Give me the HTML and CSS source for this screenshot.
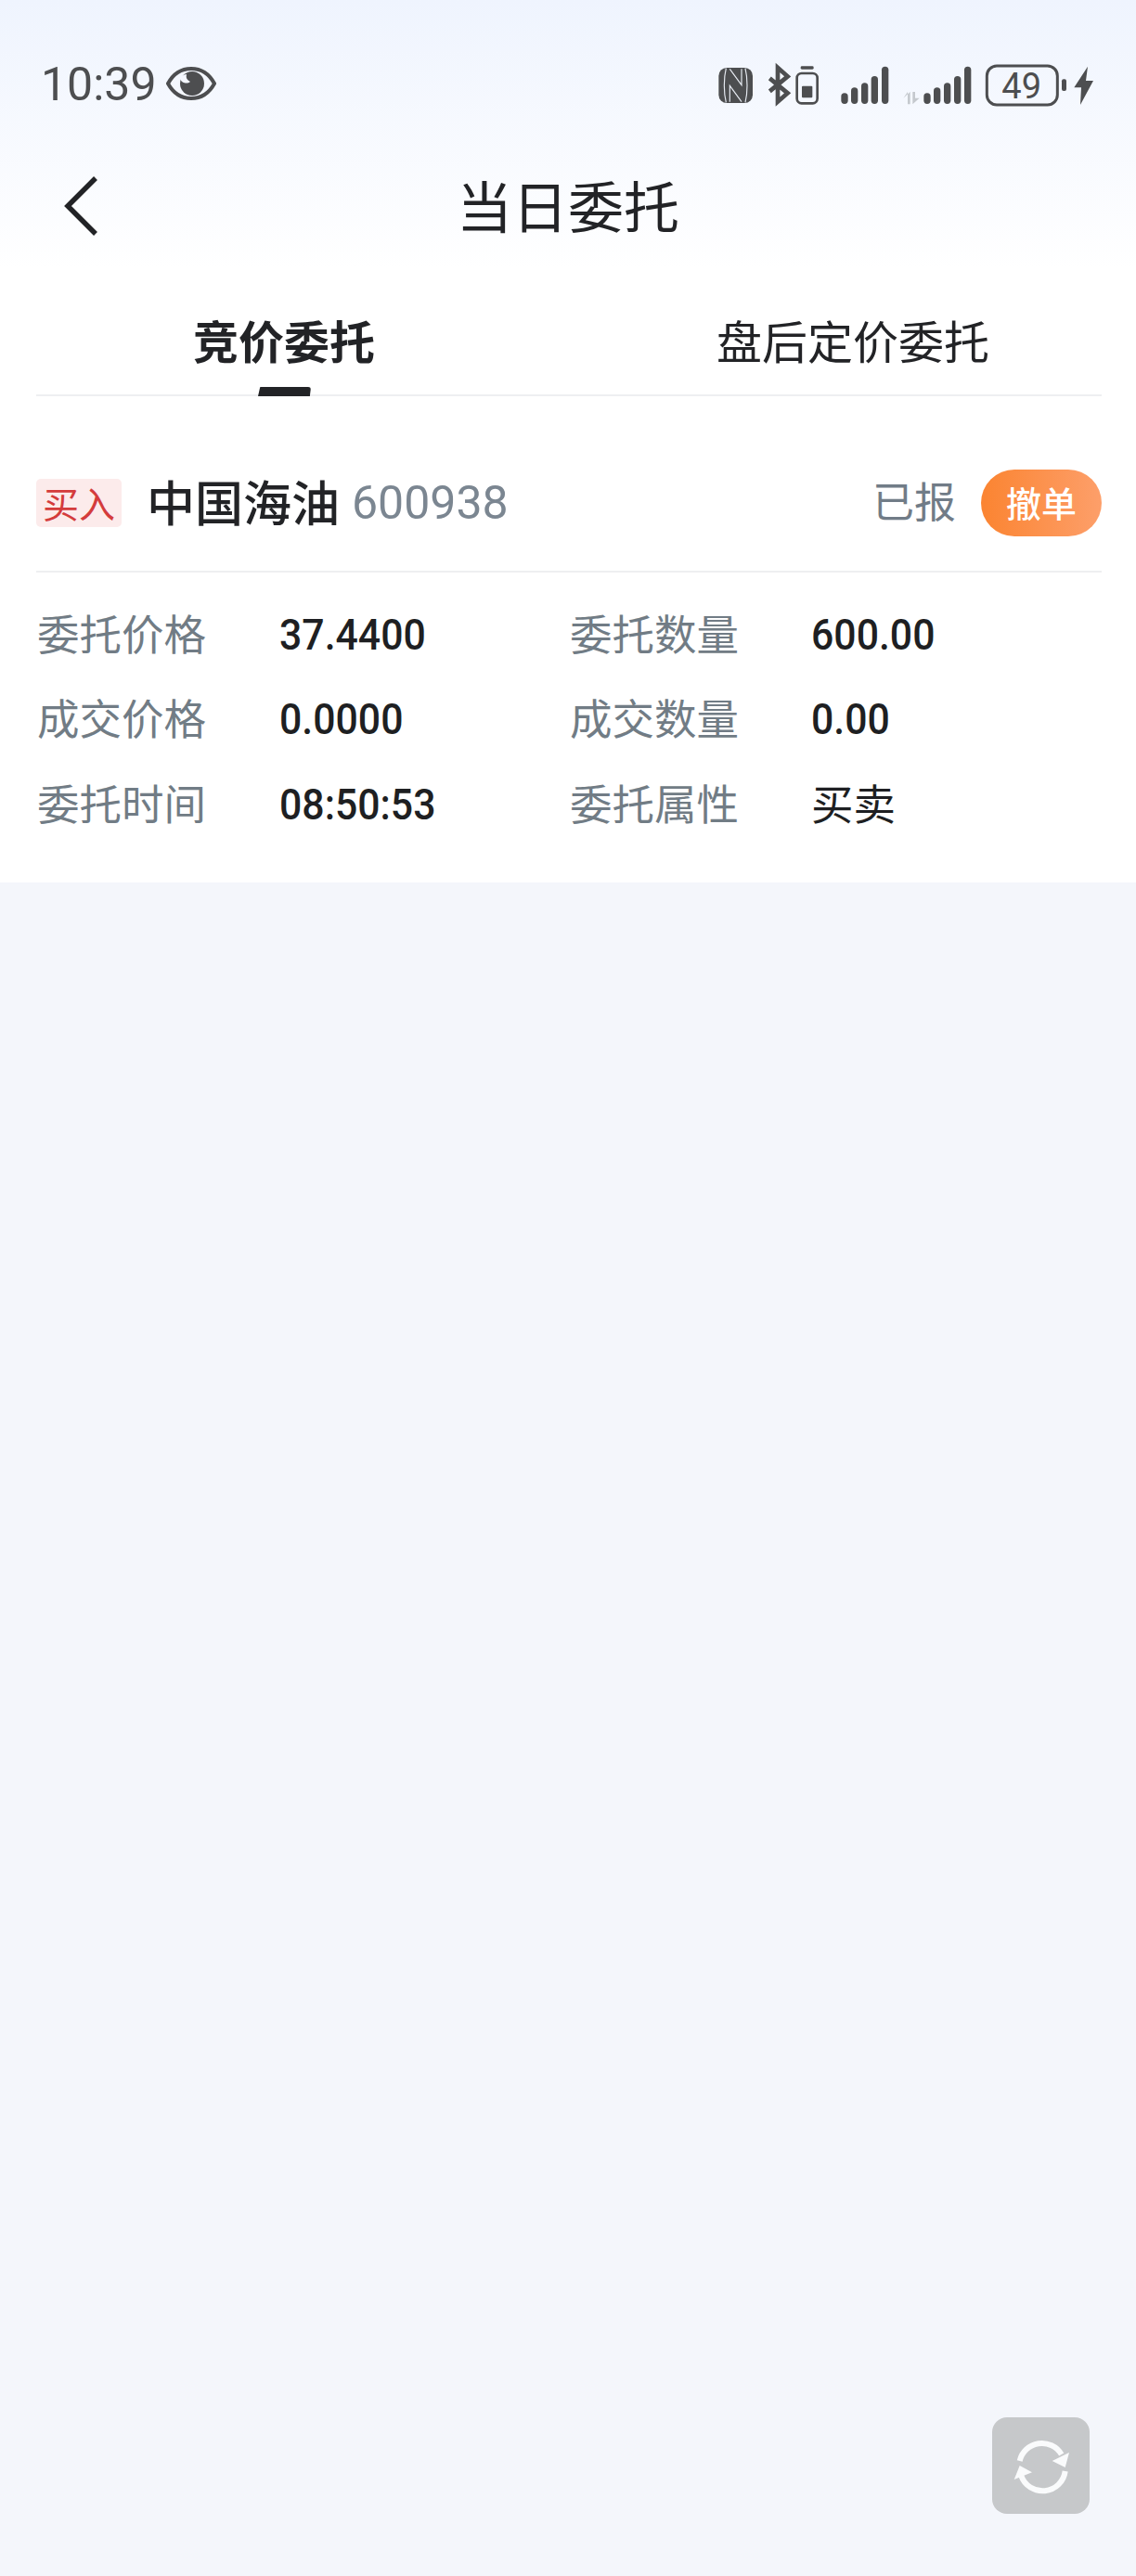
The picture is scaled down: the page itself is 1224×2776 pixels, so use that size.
FILE: index.html
```html
<!DOCTYPE html>
<html lang="zh-CN">
<head>
<meta charset="utf-8">
<title>当日委托</title>
<link rel="stylesheet" href="styles.css">
</head>
<body>
<div class="page">
  <div class="top">
    <div class="status">
      <div class="status-left">
        <span class="time">10:39</span>
        <svg class="eye" viewBox="0 0 54 36" width="54" height="36">
          <path d="M2 18C8 7 16 2 27 2s19 5 25 16c-6 11-14 16-25 16S8 29 2 18z" fill="none" stroke="#4d4e50" stroke-width="4"/>
          <circle cx="28" cy="18" r="13" fill="#4d4e50"/>
          <path d="M15 13a7 7 0 0 0 11 3 7 7 0 0 1-4-8 8 8 0 0 0-7 5z" fill="#f4f7fe"/>
        </svg>
      </div>
      <svg class="status-right" viewBox="0 0 484 80" width="484" height="80">
        <g transform="scale(.33333)">
          <rect x="103" y="66" width="110" height="114" rx="26" fill="#4d4e50"/>
          <path d="M127 68C119 100 119 146 127 178M189 68C197 100 197 146 189 178M139 176V124L177 176M177 70V122L139 70" fill="none" stroke="#e6eaf1" stroke-width="3.500"/>
          <path d="M268 100 326 148 294 176V66L326 94 268 142" fill="none" stroke="#4d4e50" stroke-width="14"/>
          <rect x="368" y="61" width="42" height="10" rx="4" fill="#4d4e50"/>
          <rect x="356" y="84" width="66" height="97" rx="15" fill="none" stroke="#4d4e50" stroke-width="8"/>
          <rect x="372" y="125" width="34" height="38" rx="3" fill="#4d4e50"/>
          <g fill="#4d4e50">
            <rect x="499" y="148" width="22" height="35" rx="11"/>
            <rect x="531" y="130" width="22" height="53" rx="11"/>
            <rect x="564" y="115" width="22" height="68" rx="11"/>
            <rect x="596" y="93" width="22" height="90" rx="11"/>
            <rect x="630" y="62" width="22" height="121" rx="11"/>
            <rect x="766" y="148" width="22" height="35" rx="11"/>
            <rect x="798" y="130" width="22" height="53" rx="11"/>
            <rect x="831" y="115" width="22" height="68" rx="11"/>
            <rect x="864" y="93" width="22" height="90" rx="11"/>
            <rect x="897" y="62" width="22" height="121" rx="11"/>
          </g>
          <path d="M700 164 714 144V184H722V144ZM730 144H738V164H752L730 184Z" fill="#c5c9ce"/>
          <rect x="970" y="60" width="228" height="126" rx="32" fill="none" stroke="#4d4e50" stroke-width="9"/>
          <rect x="1212" y="103" width="15" height="38" rx="6" fill="#4d4e50"/>
          <path d="M1296 62 1252 130H1275L1272 186 1314 108H1290z" fill="#4d4e50"/>
          <text class="batt" x="1082" y="166" text-anchor="middle">49</text>
        </g>
      </svg>
    </div>
    <div class="nav">
      <svg class="back" viewBox="0 0 42 68" width="42" height="68">
        <path d="M36 4 6 34 36 64" fill="none" stroke="#222326" stroke-width="5.5"/>
      </svg>
      <h1 class="title">当日委托</h1>
    </div>
    <div class="tabs">
      <div class="tab tab-active">竞价委托</div>
      <div class="tab tab-plain">盘后定价委托</div>
    </div>
  </div>
  <div class="rule"></div>
  <section class="order">
    <div class="order-head">
      <span class="tag">买入</span>
      <span class="name">中国海油</span>
      <span class="code">600938</span>
      <span class="state">已报</span>
      <span class="cancel">撤单</span>
    </div>
    <div class="details">
      <span class="label">委托价格</span><span class="value"><span class="num">37.4400</span></span>
      <span class="label">委托数量</span><span class="value"><span class="num">600.00</span></span>
      <span class="label">成交价格</span><span class="value"><span class="num">0.0000</span></span>
      <span class="label">成交数量</span><span class="value"><span class="num">0.00</span></span>
      <span class="label">委托时间</span><span class="value"><span class="num">08:50:53</span></span>
      <span class="label">委托属性</span><span class="value-cjk">买卖</span>
    </div>
  </section>
  <button class="refresh" aria-label="刷新">
    <svg class="refresh-icon" viewBox="0 0 60 60" width="60" height="60">
      <path d="M6.700 25A24.500 24.500 0 0 1 51.700 18M55.700 36A24.500 24.500 0 0 1 8.300 41" fill="none" stroke="#fafbfc" stroke-width="6"/>
      <path d="M60 16 55.700 32 41.700 25zM.700 45 6.700 30 20 37.300z" fill="#fafbfc"/>
    </svg>
  </button>
</div>
</body>
</html>
```
FILE: styles.css
```css
* { box-sizing: border-box; }
html, body { margin: 0; padding: 0; }
body {
  background: #f4f6fb;
  font-family: "Noto Sans CJK SC", Roboto, sans-serif;
  color: #222326;
}
.page {
  position: relative;
  height: 2776px;
  overflow: hidden;
}
.top {
  background: linear-gradient(180deg, #eff4fe 0, #ffffff 290px);
}
.status {
  height: 182px;
  display: flex;
  align-items: center;
  justify-content: space-between;
  padding-left: 44px;
}
.status-left {
  display: flex;
  align-items: center;
  gap: 10px;
}
.time {
  font-family: Roboto, sans-serif;
  font-weight: 400;
  font-size: 50px;
  line-height: 60px;
  color: #4d4e50;
}
.eye { display: block; margin-top: -2px; }
.status-right { display: block; }
.batt {
  font-family: Roboto, sans-serif;
  font-weight: 400;
  font-size: 114px;
  fill: #4d4e50;
}
.nav {
  height: 80px;
  position: relative;
  display: flex;
  align-items: center;
  justify-content: center;
}
.back {
  position: absolute;
  left: 67px;
  top: 6px;
}
.title {
  margin: 0;
  font-size: 60px;
  font-weight: 400;
  line-height: 76px;
  padding-bottom: 4px;
  color: #222326;
}
.tabs {
  height: 163px;
  display: grid;
  grid-template-columns: 1fr 1fr;
}
.tab {
  position: relative;
  text-align: center;
  font-size: 49px;
  line-height: 60px;
  padding-top: 74px;
  color: #222326;
}
.tab-plain { padding-left: 2px; }
.tab-active { font-weight: 700; }
.tab-active::after {
  content: "";
  position: absolute;
  left: 278px;
  bottom: -2px;
  width: 57px;
  height: 10px;
  background: #222326;
  border-radius: 3px 3px 0 0;
  clip-path: polygon(4% 0, 100% 0, 98% 100%, 0 100%);
}
.rule {
  height: 2px;
  margin: 0 37px 0 39px;
  background: #eeeff1;
}
.order {
  background: #fff;
  padding: 0 37px 41px 39px;
  margin-top: -2px;
}
.order::before {
  content: "";
  display: block;
  height: 2px;
  background: #eeeff1;
}
.order-head {
  height: 190px;
  padding-top: 41px;
  display: flex;
  align-items: center;
  border-bottom: 2px solid #eeeff1;
}
.tag {
  width: 92px;
  height: 52px;
  border-radius: 5px;
  background: #fcebeb;
  color: #d43c3c;
  font-size: 39px;
  line-height: 50px;
  text-align: center;
}
.name {
  margin-left: 27px;
  font-size: 52px;
  font-weight: 500;
  line-height: 60px;
  padding-bottom: 3px;
}
.code {
  margin-left: 13px;
  font-family: Roboto, sans-serif;
  font-weight: 400;
  font-size: 50px;
  line-height: 60px;
  color: #7b8691;
}
.state {
  margin-left: auto;
  margin-right: 27px;
  font-size: 45px;
  line-height: 60px;
  padding-bottom: 6px;
  color: #717c87;
}
.cancel {
  width: 130px;
  height: 72px;
  border-radius: 36px;
  background: linear-gradient(90deg, #fb8431, #fd9f6a);
  color: #fff;
  font-size: 38px;
  font-weight: 500;
  line-height: 70px;
  text-align: center;
}
.details {
  display: grid;
  grid-template-columns: 262px 312px 261px 1fr;
  grid-auto-rows: 91.5px;
  align-items: center;
  padding-top: 18px;
}
.label {
  font-size: 45.500px;
  line-height: 60px;
  color: #717c85;
  padding-left: 1px;
}
.value {
  line-height: 60px;
  padding-top: 15px;
}
.num {
  display: inline-block;
  font-family: Roboto, sans-serif;
  font-size: 46px;
  font-weight: 500;
  line-height: 60px;
  color: #1e1f22;
  transform: scaleX(.93);
  transform-origin: left center;
}
.value-cjk {
  font-size: 45.500px;
  line-height: 60px;
  color: #1e1f22;
}
.refresh {
  position: absolute;
  left: 1069px;
  top: 2605px;
  width: 105px;
  height: 104px;
  padding: 0;
  border: 0;
  border-radius: 16px;
  background: #c6c8ca;
  display: flex;
  align-items: center;
  justify-content: center;
}
.refresh-icon { overflow: visible; }
```
